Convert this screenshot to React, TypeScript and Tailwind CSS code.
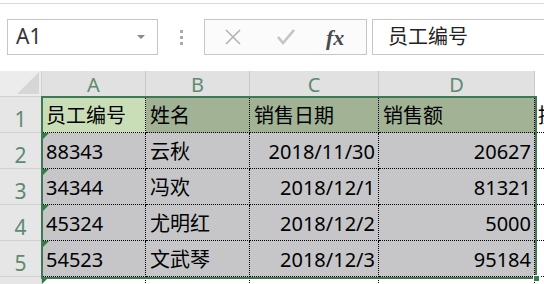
import React from 'react';

const font = { fontFamily: '"Noto Sans", "Noto Sans CJK SC", sans-serif' };

const cols = [104, 104, 129, 156];
const letters = ['A', 'B', 'C', 'D'];

const rows: string[][] = [
  ['员工编号', '姓名', '销售日期', '销售额'],
  ['88343', '云秋', '2018/11/30', '20627'],
  ['34344', '冯欢', '2018/12/1', '81321'],
  ['45324', '尤明红', '2018/12/2', '5000'],
  ['54523', '文武琴', '2018/12/3', '95184'],
];

// small green "number stored as text" marker
const Flag = () => (
  <span className="absolute left-0 top-0 w-0 h-0 border-t-[7px] border-r-[7px] border-t-[#2e7d45] border-r-transparent" />
);

function Cell({ text, col, row }: { text: string; col: number; row: number }) {
  const right = row > 0 && col >= 2;
  let bg = 'bg-[#c6c6c9]';
  if (row === 0) bg = col === 0 ? 'bg-[#c9deb6]' : 'bg-[#a1b295]';
  return (
    <div
      className={`relative h-[36px] shrink-0 border-r border-b border-dotted border-black flex items-end pb-[6px] text-[20px] text-black ${bg} ${right ? 'justify-end pr-[3px]' : 'pl-[4px]'}`}
      style={{ width: cols[col] }}
    >
      {row > 0 && col === 0 && <Flag />}
      <span className="leading-none">{text}</span>
    </div>
  );
}

export default function App() {
  return (
    <div className="relative w-[544px] h-[284px] overflow-hidden bg-white" style={font}>
      <div className="mt-[3px] border-t border-[#dadada]" />

      {/* formula bar */}
      <div className="flex items-center mt-[15px] h-[36px]">
        <div className="ml-[7px] w-[151px] h-[36px] border border-[#c6c6c6] flex items-center justify-between pl-[8px] pr-[12px]">
          <span className="text-[21px] text-[#333]">A1</span>
          <span className="w-0 h-0 border-l-[4px] border-r-[4px] border-t-[4px] border-l-transparent border-r-transparent border-t-[#888]" />
        </div>
        <div className="w-[46px] flex flex-col items-center gap-[3px]">
          <span className="w-[3px] h-[3px] bg-[#aaa]" />
          <span className="w-[3px] h-[3px] bg-[#aaa]" />
          <span className="w-[3px] h-[3px] bg-[#aaa]" />
        </div>
        <div className="w-[163px] h-[36px] border border-[#c6c6c6] bg-[#fbfbfb] flex items-center">
          <svg width="18" height="18" viewBox="0 0 18 18" className="ml-[19px]">
            <path d="M2 2 L16 16 M16 2 L2 16" stroke="#b4b4b4" strokeWidth="1.6" />
          </svg>
          <svg width="20" height="18" viewBox="0 0 20 18" className="ml-[34px]">
            <path d="M2 9 L7 15 L18 2" stroke="#c4c4c4" strokeWidth="2.6" fill="none" />
          </svg>
          <span className="ml-[30px] text-[22px] italic font-bold text-[#4a4a4a]" style={{ fontFamily: '"Liberation Serif", serif' }}>
            fx
          </span>
        </div>
        <div className="ml-[5px] flex-1 h-[36px] border border-r-0 border-[#c6c6c6] flex items-center pl-[15px] text-[20px] text-[#222]">
          员工编号
        </div>
      </div>

      {/* grid */}
      <div className="mt-[16px]">
        <div className="flex h-[26px]">
          <div className="relative w-[42px] shrink-0 bg-[#ececec] border-r border-b border-[#d0d0d0]">
            <span className="absolute right-[2px] bottom-[2px] w-0 h-0 border-b-[22px] border-l-[22px] border-b-[#d6d6d6] border-l-transparent" />
          </div>
          {letters.map((l, i) => (
            <div
              key={l}
              className="shrink-0 bg-[#e1e1e1] border-r border-[#c9c9c9] flex items-end justify-center text-[20px] leading-none pb-[2px] text-[#5f8a70]"
              style={{ width: cols[i] }}
            >
              {l}
            </div>
          ))}
          <div className="flex-1 bg-white" />
        </div>
        {rows.map((r, ri) => (
          <div key={ri} className="flex">
            <div className="w-[42px] h-[36px] shrink-0 bg-[#e6e6e6] border-r border-b border-[#d0d0d0] flex items-end justify-center pb-[2px] text-[21px] leading-none text-[#5f8a70]">
              {ri + 1}
            </div>
            {r.map((t, ci) => (
              <Cell key={ci} text={t} col={ci} row={ri} />
            ))}
            <div className="flex-1 h-[36px] border-b border-dotted border-black pl-[3px] flex items-end pb-[6px] text-[20px] overflow-hidden">
              {ri === 0 && <span className="leading-none">提</span>}
            </div>
          </div>
        ))}
        <div className="flex h-[20px]">
          <div className="w-[42px] shrink-0 bg-[#e6e6e6] border-r border-[#d0d0d0]" />
          {cols.map((w, i) => (
            <div key={i} className="relative shrink-0 border-r border-dotted border-black" style={{ width: w }}>
              {i === 0 && <Flag />}
            </div>
          ))}
        </div>
      </div>

      {/* selection outline */}
      <div className="absolute left-[41px] top-[96px] w-[496px] h-[183px] border-2 border-[#3c7a55]" />
      <div className="absolute left-[533px] top-[275px] w-[7px] h-[7px] bg-[#3c7a55] border border-white" />
    </div>
  );
}
